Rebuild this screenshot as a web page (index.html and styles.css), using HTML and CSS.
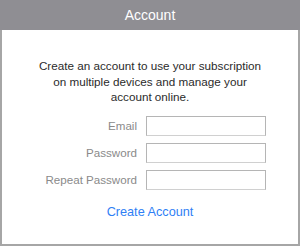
FILE: index.html
```html
<!DOCTYPE html>
<html lang="en">
<head>
  <meta charset="UTF-8" />
  <title>Account</title>
  <link rel="stylesheet" href="styles.css">
</head>
<body>
  <div class="panel">
    <div class="header">Account</div>
    <div class="content">
      <p class="intro">Create an account to use your subscription on multiple devices and manage your account online.</p>
      <div class="form">
        <label for="email">Email</label>
        <input type="text" id="email">
        <label for="password">Password</label>
        <input type="password" id="password">
        <label for="repeat">Repeat Password</label>
        <input type="password" id="repeat">
      </div>
      <a class="create" href="#">Create Account</a>
    </div>
  </div>
</body>
</html>
```

FILE: styles.css
```css
body {
  margin: 0;
  font-family: "Liberation Sans", Arial, sans-serif;
  background: #fff;
}
.panel {
  width: 300px;
  height: 246px;
  box-sizing: border-box;
  display: flex;
  flex-direction: column;
}
.header {
  height: 30px;
  background: #8f8e93;
  color: #fff;
  font-size: 14px;
  line-height: 30px;
  text-align: center;
}
.content {
  flex: 1;
  border: 2px solid #a6a6a6;
  border-top: none;
  text-align: center;
}
.intro {
  margin: 28px 30px 0;
  font-size: 11.7px;
  line-height: 15.5px;
  color: #2b2b2b;
}
.form {
  display: grid;
  grid-template-columns: 135px 120px;
  column-gap: 9px;
  row-gap: 7px;
  align-items: center;
  margin-top: 11px;
}
.form label {
  text-align: right;
  font-size: 11.6px;
  color: #8a8a8a;
}
.form input {
  height: 20px;
  box-sizing: border-box;
  margin: 0;
  border: 1px solid #b5b5b5;
  border-bottom-color: #d0d0d0;
}
.create {
  display: inline-block;
  margin-top: 15px;
  font-size: 12.7px;
  color: #2f7ff5;
  text-decoration: none;
}
```
